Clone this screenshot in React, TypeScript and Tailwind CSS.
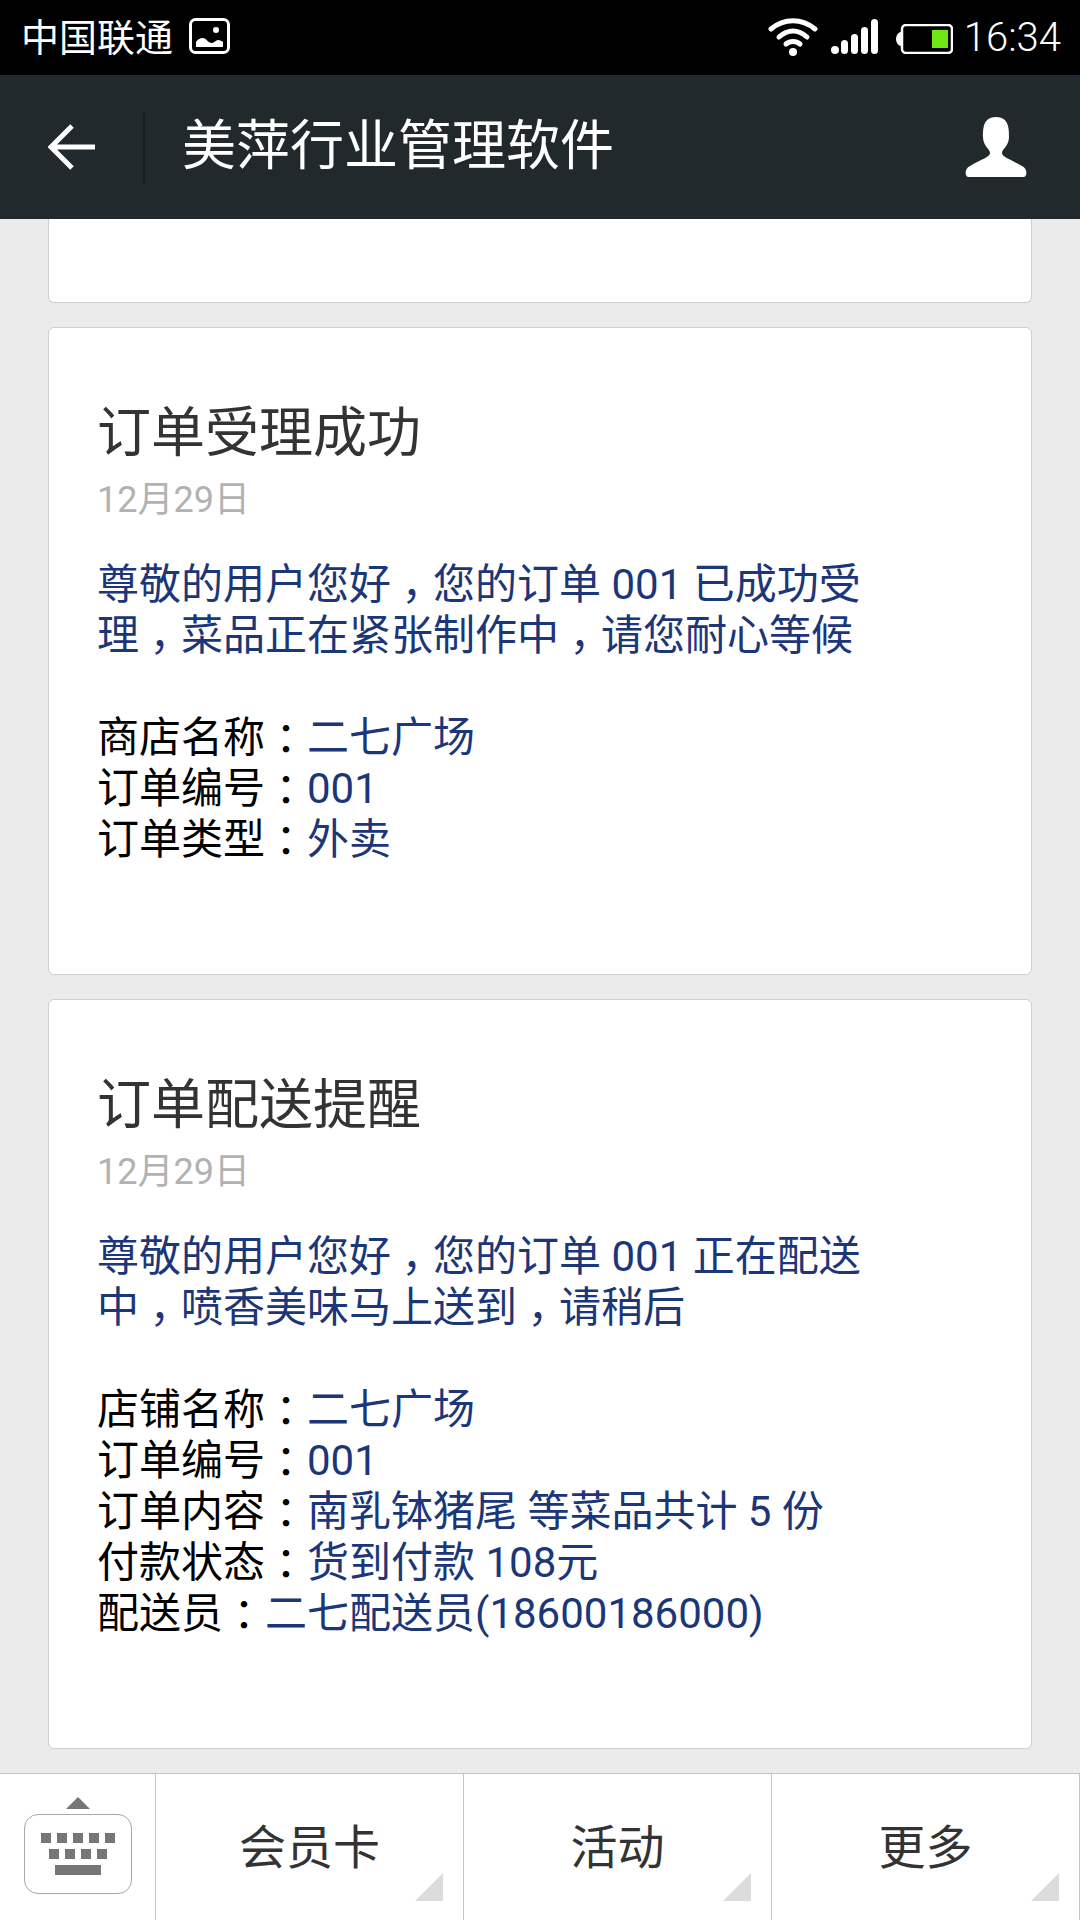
import React from 'react';

const FONT = "font-['Roboto','Noto_Sans_CJK_SC',sans-serif]";

// Android's fallback font centres full-width punctuation in its cell
const Punct = ({ mark }: { mark: string }) => (
  <span className="inline-block w-[1em] text-center [font-feature-settings:'halt']">{mark}</span>
);

const Line = ({ label, value }: { label: string; value: string }) => (
  <div className="text-black">
    {label}
    <Punct mark="：" />
    <span className="text-[#1b3679]">{value}</span>
  </div>
);

const Card = ({ title, intro, rows }: { title: string; intro: React.ReactNode; rows: { label: string; value: string }[] }) => (
  <div className="bg-white border border-[#cfcfcf] rounded-[6px] pl-[48px] pt-[74px] pb-[109px] shrink-0">
    <div className="text-[54px] leading-[64px] text-[#333333]">{title}</div>
    <div className="text-[36px] leading-[40px] text-[#b2b2b2] mt-[14px]">12月29日</div>
    <div className="text-[42px] leading-[51px] mt-[39px]">
      <div className="text-[#1b3679]">{intro}</div>
      <div className="mt-[51px]">
        {rows.map((row) => (
          <Line key={row.label} label={row.label} value={row.value} />
        ))}
      </div>
    </div>
  </div>
);

const TabCell = ({ label }: { label: string }) => (
  <div className="relative flex-1 flex items-center justify-center border-l border-[#c4c4c4] text-[47px] text-[#333333] pt-[2px]">
    {label}
    <svg className="absolute right-[20px] bottom-[19px]" width="28" height="28" viewBox="0 0 28 28">
      <path d="M28 0V28H0Z" fill="#dcdcdc" />
    </svg>
  </div>
);

export default function App() {
  return (
    <div className={`${FONT} w-[1080px] h-[1920px] flex flex-col overflow-hidden bg-[#ebebeb]`}>
      {/* Status bar */}
      <div className="h-[75px] bg-black text-white flex items-center justify-between pl-[21px] pr-[19px]">
        <div className="flex items-center gap-[16px]">
          <span className="text-[38px] leading-none">中国联通</span>
          <svg width="42" height="37" viewBox="0 0 42 37" className="mt-[-2px]">
            <rect x="1.5" y="1.5" width="38" height="33" rx="5" fill="none" stroke="#fff" strokeWidth="3" />
            <path d="M7 29V24C9 21 11 20 14 20C17 20 19 25 23 25C25 25 27 22 29 22C31 22 33 23 34 24V29Z" fill="#fff" />
            <circle cx="27" cy="12" r="3" fill="#fff" />
          </svg>
        </div>
        <div className="flex items-center">
          <svg width="50" height="38" viewBox="0 0 50 38" className="mt-[-2px]">
            <path d="M3 11C16 0 34 0 47 11" fill="none" stroke="#fff" strokeWidth="5" strokeLinecap="round" />
            <path d="M11 19C20 11 30 11 39 19" fill="none" stroke="#fff" strokeWidth="5" strokeLinecap="round" />
            <path d="M18 26C22 22.500 28 22.500 32 26" fill="none" stroke="#fff" strokeWidth="5" strokeLinecap="round" />
            <circle cx="25" cy="34" r="4" fill="#fff" />
          </svg>
          <svg width="48" height="36" viewBox="0 0 48 36" className="ml-[13px] mt-[-1px]">
            <rect x="0" y="27" width="8" height="8" rx="4" fill="#fff" />
            <rect x="10" y="21" width="7" height="14" rx="3.5" fill="#fff" />
            <rect x="20" y="15" width="7" height="20" rx="3.5" fill="#fff" />
            <rect x="30" y="8" width="7" height="27" rx="3.5" fill="#fff" />
            <rect x="40" y="0" width="7" height="35" rx="3.500" fill="#fff" />
          </svg>
          <svg width="57" height="30" viewBox="0 0 57 30" className="ml-[17px] mt-[2px]">
            <path d="M5 8H7V22H5C2 22 0 18 0 15C0 12 2 8 5 8Z" fill="#fff" />
            <rect x="6" y="1" width="50" height="28" rx="4" fill="none" stroke="#fff" strokeWidth="2.500" />
            <rect x="36" y="6" width="16" height="18" fill="#6de814" />
          </svg>
          <span className="text-[40px] leading-none ml-[11px] font-light">16:34</span>
        </div>
      </div>

      {/* Title bar */}
      <div className="h-[144px] bg-[#22292c] text-white flex items-center">
        <div className="w-[145px] h-[72px] flex items-center pl-[48px] border-r-2 border-[#191e20]">
          <svg width="48" height="48" viewBox="0 0 48 48">
            <path d="M47 24H3M24 3L3 24L24 45" fill="none" stroke="#fff" strokeWidth="5" />
          </svg>
        </div>
        <div className="flex-1 pl-[37px] text-[54px] leading-none">美萍行业管理软件</div>
        <svg width="62" height="60" viewBox="0 0 62 60" className="mr-[53px]">
          <path d="M31 0C44 0 44 12 44 20C44 29 37 32 37 36C37 40 45 42 57 49C61 51 62 55 61 58C60 60 59 60 58 60H4C3 60 2 60 1 58C0 55 1 51 5 49C17 42 25 40 25 36C25 32 18 29 18 20C18 12 18 0 31 0Z" fill="#fff" />
        </svg>
      </div>

      {/* Messages */}
      <div className="flex-1 min-h-0 overflow-hidden px-[48px] flex flex-col gap-[24px]">
        <div className="h-[84px] shrink-0 bg-white border border-t-0 border-[#cfcfcf] rounded-b-[6px]" />
        <Card
          title="订单受理成功"
          intro={
            <>
              尊敬的用户您好<Punct mark="，" />您的订单 001 已成功受
              <br />
              理<Punct mark="，" />菜品正在紧张制作中<Punct mark="，" />请您耐心等候
            </>
          }
          rows={[
            { label: '商店名称', value: '二七广场' },
            { label: '订单编号', value: '001' },
            { label: '订单类型', value: '外卖' },
          ]}
        />
        <Card
          title="订单配送提醒"
          intro={
            <>
              尊敬的用户您好<Punct mark="，" />您的订单 001 正在配送
              <br />
              中<Punct mark="，" />喷香美味马上送到<Punct mark="，" />请稍后
            </>
          }
          rows={[
            { label: '店铺名称', value: '二七广场' },
            { label: '订单编号', value: '001' },
            { label: '订单内容', value: '南乳钵猪尾 等菜品共计 5 份' },
            { label: '付款状态', value: '货到付款 108元' },
            { label: '配送员', value: '二七配送员(18600186000)' },
          ]}
        />
      </div>

      {/* Bottom menu */}
      <div className="h-[147px] shrink-0 bg-white border-t border-[#c4c4c4] flex">
        <div className="w-[155px] shrink-0 flex flex-col items-center pt-[23px]">
          <svg width="24" height="12" viewBox="0 0 24 12">
            <path d="M12 0L24 12H0Z" fill="#767676" />
          </svg>
          <div className="mt-[5px] w-[108px] h-[80px] border border-[#a8a8a8] rounded-[14px] flex flex-col items-center pt-[18px] gap-[6px]">
            <div className="flex gap-[6px]">
              {[0, 1, 2, 3, 4].map((i) => (
                <div key={i} className="w-[10px] h-[10px] bg-[#767676]" />
              ))}
            </div>
            <div className="flex gap-[6px]">
              {[0, 1, 2, 3].map((i) => (
                <div key={i} className="w-[10px] h-[10px] bg-[#767676]" />
              ))}
            </div>
            <div className="w-[46px] h-[10px] bg-[#767676]" />
          </div>
        </div>
        <TabCell label="会员卡" />
        <TabCell label="活动" />
        <TabCell label="更多" />
        <div className="w-px shrink-0 bg-[#c4c4c4]" />
      </div>
    </div>
  );
}
